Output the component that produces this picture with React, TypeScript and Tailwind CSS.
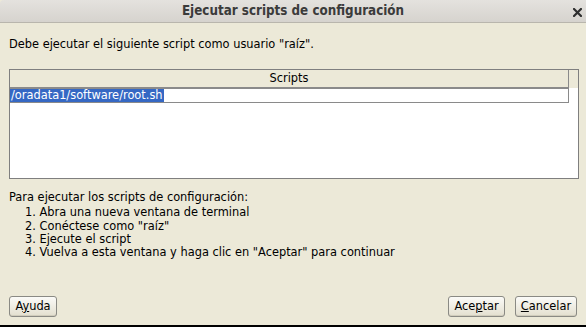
import React from "react";

const font = { fontFamily: '"DejaVu Sans", Verdana, sans-serif' };

const Btn = ({ children, className = "" }: { children: React.ReactNode; className?: string }) => (
  <button
    className={
      "h-[21px] rounded-[3px] border border-[#8a8a84] bg-gradient-to-b from-[#fbfbf8] to-[#e3dfcf] text-[11.4px] leading-none text-black shadow-[inset_0_-1px_0_#d0ccbc] " +
      className
    }
  >
    {children}
  </button>
);

export default function App() {
  return (
    <div className="h-[327px] w-[586px] overflow-hidden bg-black" style={font}>
      <div className="flex h-[325px] flex-col bg-[#ece9d8]">
        {/* title bar */}
        <div className="relative flex h-[23px] shrink-0 items-center justify-center rounded-tl-[4px] border-b border-[#b9b6ad] bg-gradient-to-b from-[#e4e2de] to-[#d6d3ce]">
          <span
            className="text-[13.3px] font-bold text-[#3b3b3b]"
            style={{ fontFamily: '"DejaVu Sans Condensed", "DejaVu Sans", sans-serif', fontStretch: "condensed" }}
          >
            Ejecutar scripts de configuración
          </span>
          <svg className="absolute right-[4px] top-[8px]" width="9" height="9" viewBox="0 0 9 9">
            <path d="M1 1 L8 8 M8 1 L1 8" stroke="#2e2e2e" strokeWidth="2.2" strokeLinecap="square" />
          </svg>
        </div>

        <div className="px-[9px] pt-[15px] text-[11.4px] leading-[13px] text-black">
          Debe ejecutar el siguiente script como usuario "raíz".
        </div>

        {/* table */}
        <div className="ml-[9px] mr-[7px] mt-[18px] flex h-[110px] flex-col border border-[#7f7f7f] bg-white">
          <div className="flex h-[18px] shrink-0 bg-[#ece9d8]">
            <div className="flex w-[559px] items-center justify-center border-b border-r border-[#8a8a8a] text-[11.4px] text-black">
              Scripts
            </div>
          </div>
          <div className="flex h-[15px] w-[559px] items-center border-y border-r border-[#8a8a8a] bg-white">
            <span className="bg-[#3568c4] pl-[1px] pr-[1px] text-[11.4px] leading-[13px] text-white">/oradata1/software/root.sh</span>
          </div>
        </div>

        {/* instructions */}
        <div className="px-[9px] pt-[12px] text-[11.4px] leading-[13.3px] text-black">
          <div className="mb-[2px]">Para ejecutar los scripts de configuración:</div>
          <ol className="pl-[16px]">
            <li>1. Abra una nueva ventana de terminal</li>
            <li>2. Conéctese como "raíz"</li>
            <li>3. Ejecute el script</li>
            <li>4. Vuelva a esta ventana y haga clic en "Aceptar" para continuar</li>
          </ol>
        </div>

        <div className="mt-auto flex items-center px-[9px] pb-[8px]">
          <Btn className="w-[48px]">
            A<span className="underline">y</span>uda
          </Btn>
          <div className="flex-1" />
          <Btn className="w-[57px]">
            Ace<span className="underline">p</span>tar
          </Btn>
          <Btn className="ml-[10px] w-[62px]">
            <span className="underline">C</span>ancelar
          </Btn>
        </div>
      </div>
    </div>
  );
}
